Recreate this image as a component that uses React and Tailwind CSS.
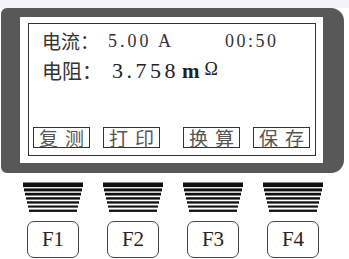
import React from 'react';

const cjk = { fontFamily: '"Noto Sans CJK SC", "Liberation Sans", sans-serif' };
const serif = { fontFamily: '"Liberation Serif", "DejaVu Serif", serif' };

const stripes = [
  { y: 0.5, h: 4.6, i: 0 },
  { y: 6.4, h: 3, i: 1 },
  { y: 10.8, h: 2.7, i: 2 },
  { y: 15.2, h: 2.4, i: 3 },
  { y: 19.3, h: 2.3, i: 4 },
  { y: 23.5, h: 2.1, i: 5 },
  { y: 27.6, h: 2.3, i: 6 },
];

// striped key cap drawing above each function key
const Stripes = () => (
  <svg width="62" height="31" viewBox="0 0 62 31">
    {stripes.map((s, n) => (
      <rect key={n} x={s.i + 1} y={s.y} width={60 - s.i * 2} height={s.h} fill="#111" />
    ))}
  </svg>
);

const SoftKey = ({ label, className }) => (
  <div
    className={`w-[57px] h-[21px] border border-[#333] flex items-center justify-center gap-[7px] text-[19px] leading-none text-[#555] ${className || ''}`}
    style={cjk}
  >
    {label.split('').map((ch) => (
      <span key={ch}>{ch}</span>
    ))}
  </div>
);

const FKey = ({ label }) => (
  <div className="w-[80px] flex flex-col items-center">
    <Stripes />
    <div
      className="mt-[8px] w-[52px] h-[37px] border border-[#444] rounded-[7px] flex items-center justify-center text-[21px] text-[#222]"
      style={serif}
    >
      {label}
    </div>
  </div>
);

export default function App() {
  return (
    <div className="w-[349px] h-[259px] bg-white overflow-hidden">
      <div className="h-[8px] bg-[#f1f4f8]" />

      {/* LCD panel */}
      <div className="ml-[1px] w-[343px] h-[165px] bg-[#585858] rounded-tl-[6px] rounded-bl-[6px] rounded-tr-[13px] rounded-br-[13px] pl-[19px] pt-[9px]">
        <div className="w-[303px] h-[146px] bg-white pl-[8px] pt-[6px]">
          <div className="w-[288px] h-[133px] border border-[#333] flex flex-col">
            <div className="mt-[7px] pl-[13px] h-[19px] flex items-center text-[#333] whitespace-nowrap">
              <span className="text-[19px] leading-none" style={cjk}>电流：</span>
              <span className="ml-[9px] text-[18px] leading-none tracking-[3px]" style={serif}>5.00 A</span>
              <span className="ml-[51px] text-[18px] leading-none tracking-[2.5px]" style={serif}>00:50</span>
            </div>
            <div className="mt-[9px] pl-[13px] h-[24px] flex items-center text-[#222] whitespace-nowrap">
              <span className="text-[20px] leading-none text-[#333]" style={cjk}>电阻：</span>
              <span className="ml-[10px] text-[22px] leading-none tracking-[3.5px]" style={serif}>3.758</span>
              <span className="ml-[3px] text-[21px] leading-none font-bold" style={serif}>m</span>
              <span className="ml-[5px] text-[18px] leading-none self-start mt-[1px]" style={serif}>Ω</span>
            </div>
            <div className="mt-auto mb-[7px] ml-[4px] flex">
              <SoftKey label="复测" />
              <SoftKey label="打印" className="ml-[13px]" />
              <SoftKey label="换算" className="ml-[23px]" />
              <SoftKey label="保存" className="ml-[13px]" />
            </div>
          </div>
        </div>
      </div>

      {/* function keys */}
      <div className="mt-[9px] pl-[13px] flex">
        <FKey label="F1" />
        <FKey label="F2" />
        <FKey label="F3" />
        <FKey label="F4" />
      </div>
    </div>
  );
}
